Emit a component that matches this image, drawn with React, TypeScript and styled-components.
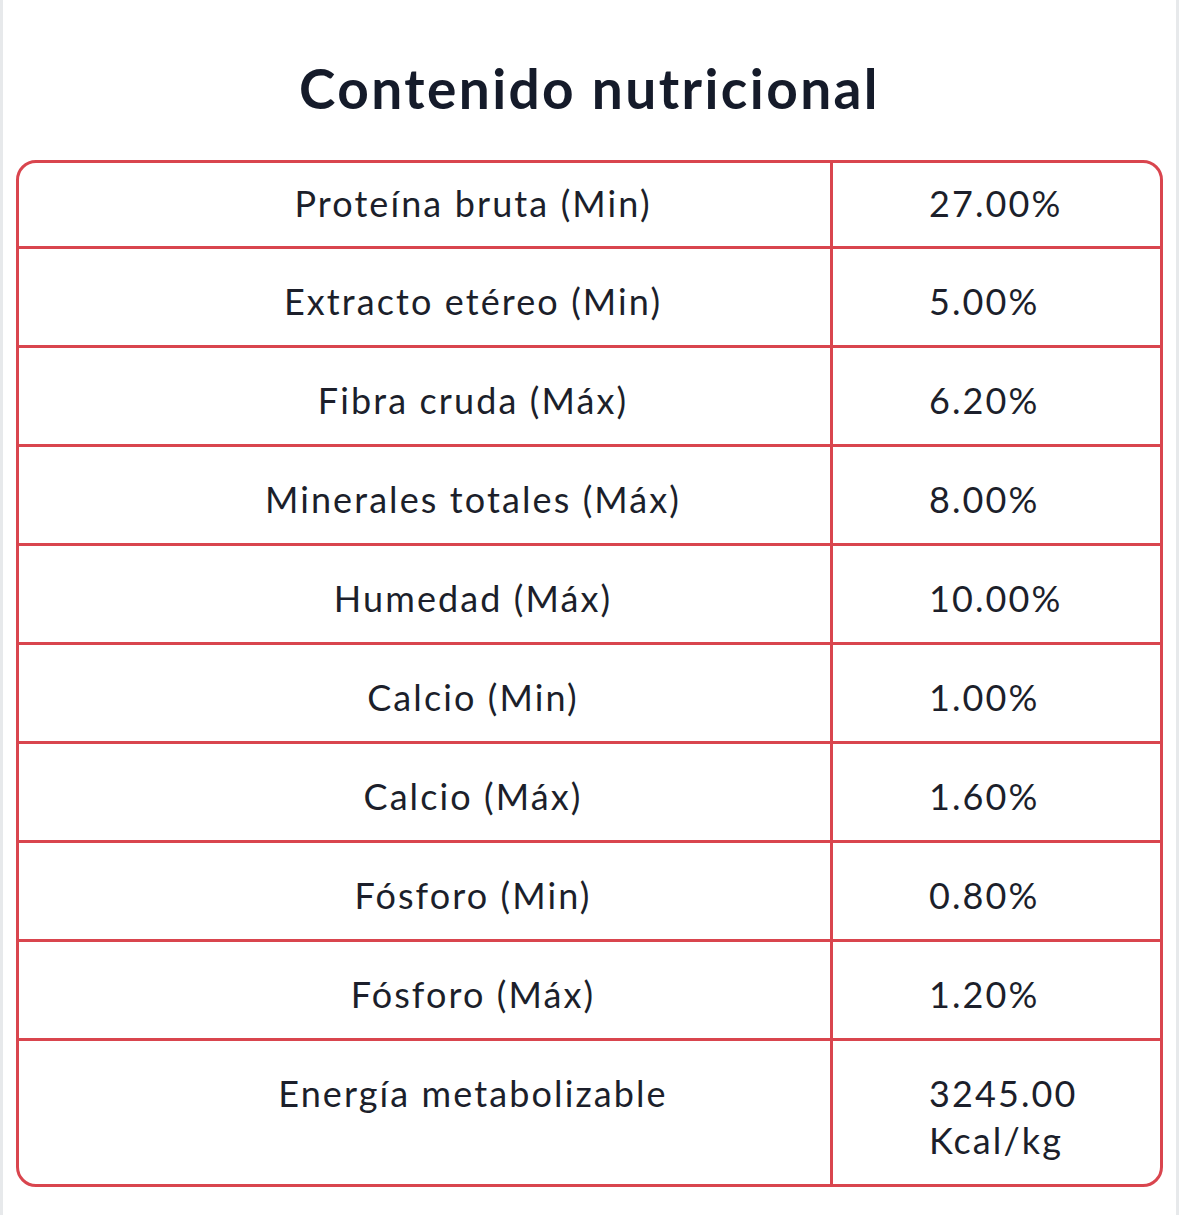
import React from 'react';
import styled, { createGlobalStyle } from 'styled-components';

const GlobalStyle = createGlobalStyle`
  html, body {
    margin: 0;
    padding: 0;
    background: #e7e9eb;
  }
  body {
    font-family: Lato, 'Liberation Sans', sans-serif;
  }
`;

const Panel = styled.div`
  margin: 0 3px;
  min-height: 1215px;
  box-sizing: border-box;
  background: #ffffff;
  padding: 57px 13px 27px;
`;

const Title = styled.h2`
  margin: 0 0 41px;
  text-align: center;
  font-family: Lato, 'Liberation Sans', sans-serif;
  font-weight: 700;
  font-size: 55px;
  line-height: 62px;
  letter-spacing: 2.4px;
  color: #151b2a;
`;

const Frame = styled.div`
  border: 3px solid #d9454e;
  border-radius: 20px;
  overflow: hidden;
`;

const Table = styled.table`
  width: 100%;
  border-collapse: separate;
  border-spacing: 0;
  table-layout: fixed;
`;

const Row = styled.tr`
  &:not(:last-child) td {
    border-bottom: 3px solid #d9454e;
  }
  &:first-child td {
    padding-top: 17px;
    padding-bottom: 19px;
  }
`;

const Cell = styled.td<{ $label?: boolean }>`
  box-sizing: border-box;
  padding: ${({ $label }) => ($label ? '29px 0 20px 97px' : '29px 10px 20px 96px')};
  font-size: 36px;
  line-height: 47px;
  letter-spacing: 2.1px;
  color: #1c1f2b;
  vertical-align: top;
  text-align: ${({ $label }) => ($label ? 'center' : 'left')};
  width: ${({ $label }) => ($label ? '814px' : 'auto')};
  border-right: ${({ $label }) => ($label ? '3px solid #d9454e' : 'none')};
`;

const rows: [string, string][] = [
  ['Proteína bruta (Min)', '27.00%'],
  ['Extracto etéreo (Min)', '5.00%'],
  ['Fibra cruda (Máx)', '6.20%'],
  ['Minerales totales (Máx)', '8.00%'],
  ['Humedad (Máx)', '10.00%'],
  ['Calcio (Min)', '1.00%'],
  ['Calcio (Máx)', '1.60%'],
  ['Fósforo (Min)', '0.80%'],
  ['Fósforo (Máx)', '1.20%'],
  ['Energía metabolizable', '3245.00 Kcal/kg'],
];

const App: React.FC = () => (
  <>
    <GlobalStyle />
    <Panel>
      <Title>Contenido nutricional</Title>
      <Frame>
        <Table>
          <tbody>
            {rows.map(([label, value]) => (
              <Row key={label}>
                <Cell $label>{label}</Cell>
                <Cell>{value}</Cell>
              </Row>
            ))}
          </tbody>
        </Table>
      </Frame>
    </Panel>
  </>
);

export default App;
